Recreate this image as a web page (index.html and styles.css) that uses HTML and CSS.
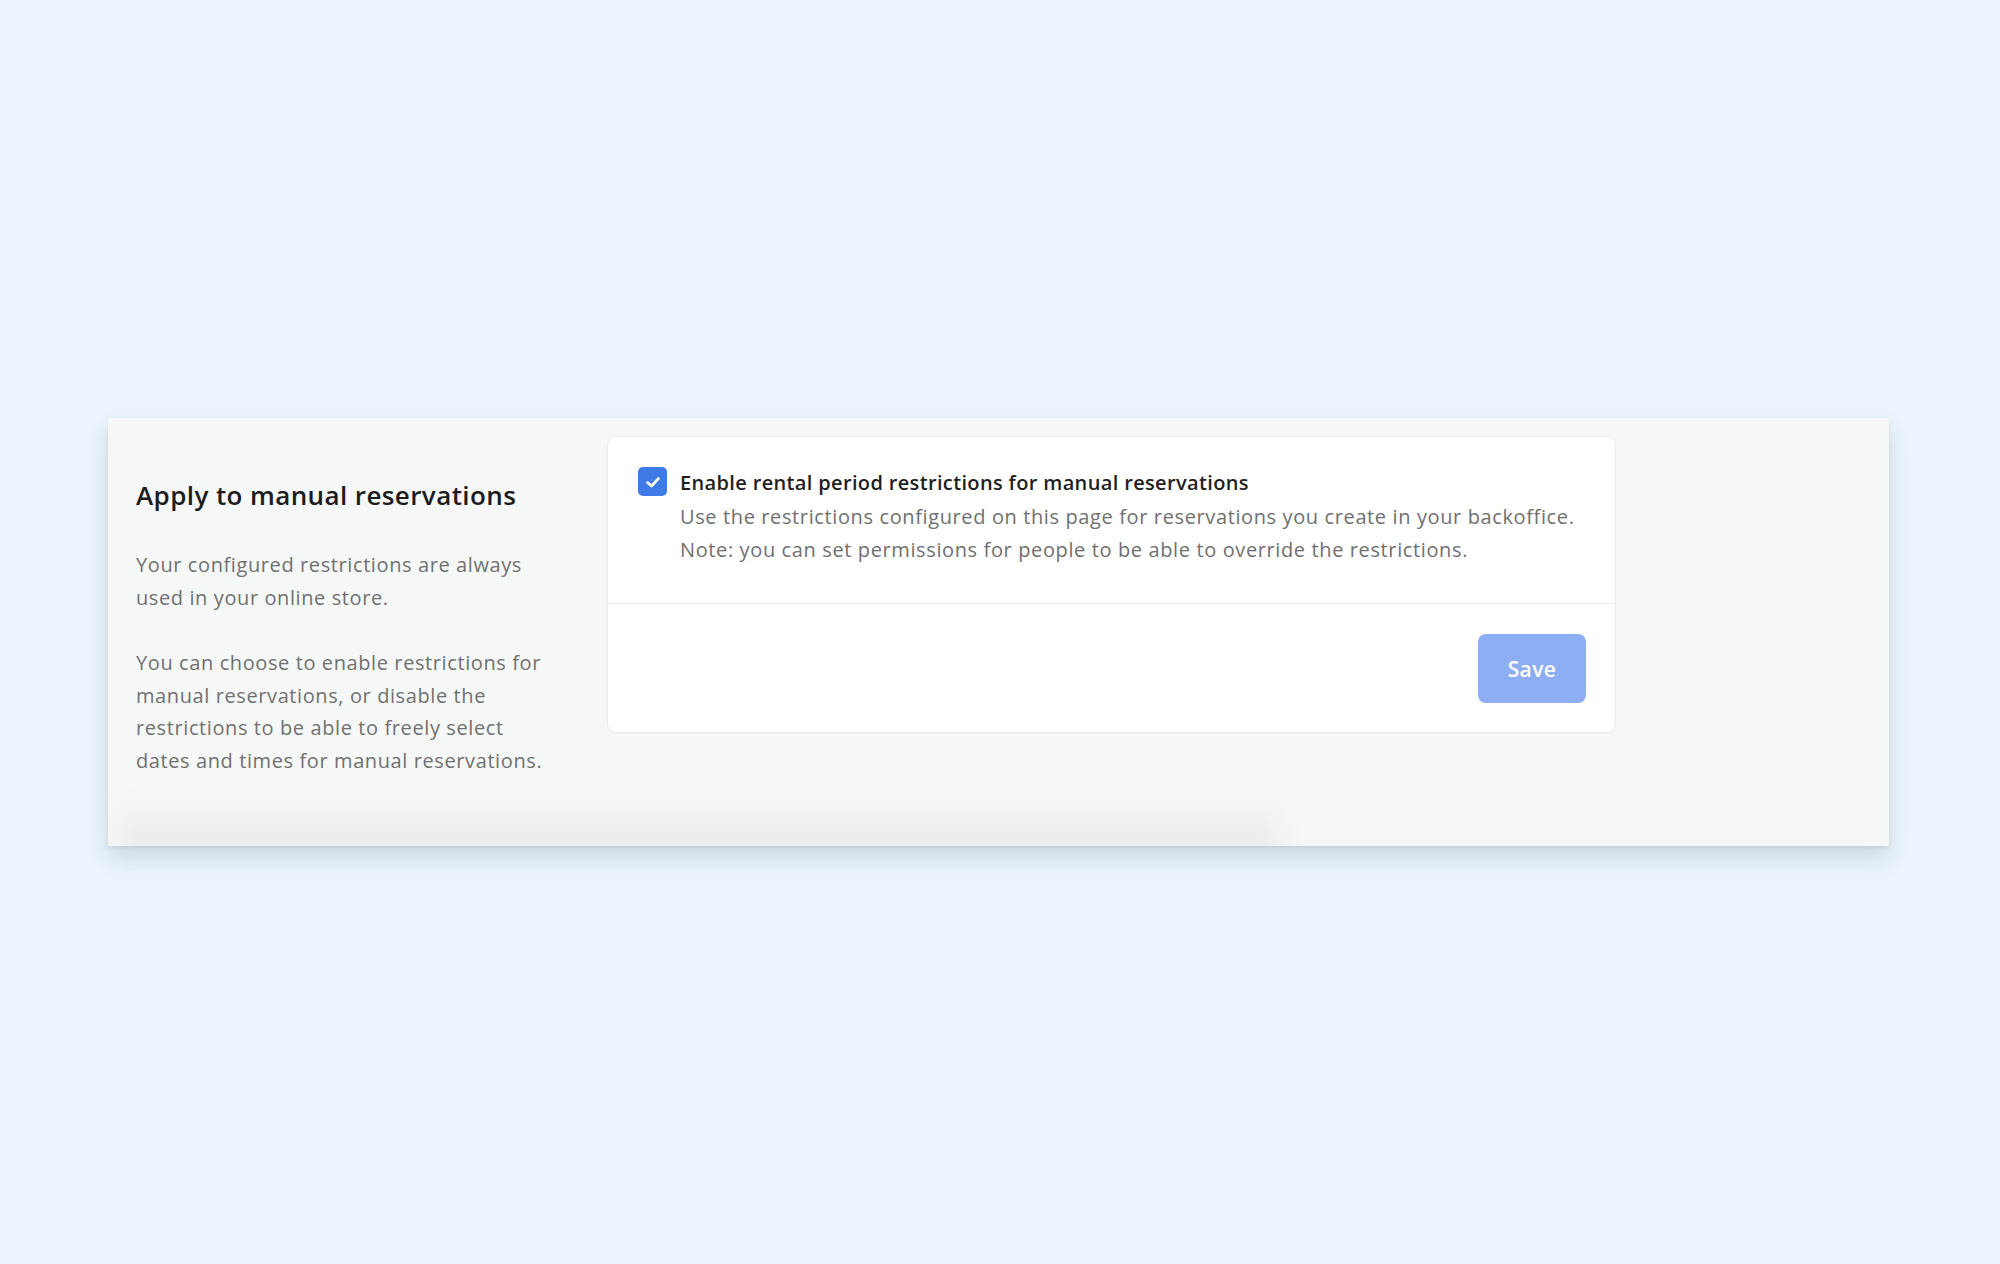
FILE: index.html
```html
<!DOCTYPE html>
<html lang="en">
<head>
<meta charset="utf-8">
<title>Apply to manual reservations</title>
<link rel="stylesheet" href="styles.css">
</head>
<body>
<div class="page">
  <section class="panel">
    <div class="intro">
      <h2 class="intro-title">Apply to manual reservations</h2>
      <p class="intro-text">Your configured restrictions are always used in your online store.</p>
      <p class="intro-text">You can choose to enable restrictions for manual reservations, or disable the restrictions to be able to freely select dates and times for manual reservations.</p>
    </div>
    <div class="card">
      <div class="card-body">
        <label class="check-row">
          <span class="checkbox">
            <svg viewBox="0 0 28 28" width="28" height="28"><polyline points="8.5,14.5 12.5,18 19.5,10.5" fill="none" stroke="#fff" stroke-width="2.6" stroke-linecap="round" stroke-linejoin="round"/></svg>
          </span>
          <span class="check-text">
            <span class="check-label">Enable rental period restrictions for manual reservations</span>
            <span class="check-desc">Use the restrictions configured on this page for reservations you create in your backoffice.<br>Note: you can set permissions for people to be able to override the restrictions.</span>
          </span>
        </label>
      </div>
      <div class="card-footer">
        <button class="btn-save" type="button">Save</button>
      </div>
    </div>
  </section>
</div>
</body>
</html>
```
FILE: styles.css
```css
html, body {
  margin: 0;
  padding: 0;
}
body {
  background: #ecf5fd;
  font-family: "Open Sans", "Liberation Sans", sans-serif;
  width: 2000px;
  height: 1264px;
  overflow: hidden;
}
.page {
  padding: 418px 111px 0 108px;
}
.panel {
  position: relative;
  overflow: hidden;
  display: flex;
  align-items: flex-start;
  gap: 57px;
  height: 428px;
  box-sizing: border-box;
  padding: 19px 28px 0 28px;
  background: #f6f8f8;
  box-shadow: 0 12px 22px rgba(40, 60, 80, 0.16), 0 2px 4px rgba(40, 60, 80, 0.08);
}
.panel::after {
  content: "";
  position: absolute;
  left: 10px;
  bottom: -10px;
  width: 1160px;
  height: 58px;
  background: linear-gradient(to bottom, rgba(0,0,0,0) 0%, rgba(0,0,0,0.065) 100%);
  filter: blur(14px);
  pointer-events: none;
}
.intro {
  width: 415px;
  flex: none;
  padding-top: 42px;
  position: relative;
  z-index: 1;
}
.intro-title {
  margin: 0 0 38px;
  font-size: 26px;
  line-height: 32px;
  font-weight: 600;
  letter-spacing: 0.4px;
  color: #1c1c1c;
}
.intro-text {
  margin: 0 0 33px;
  font-size: 20px;
  line-height: 32.5px;
  letter-spacing: 0.6px;
  color: #707070;
}
.card {
  width: 1007px;
  flex: none;
  background: #fff;
  border-radius: 8px;
  box-shadow: 0 0 0 1px rgba(0,0,0,0.03), 0 1px 3px rgba(0,0,0,0.05);
  position: relative;
  z-index: 1;
}
.card-body {
  padding: 30px 30px 37px;
  border-bottom: 1px solid #ebeced;
}
.check-row {
  display: flex;
  align-items: flex-start;
  gap: 13px;
}
.checkbox {
  flex: none;
  width: 29px;
  height: 29px;
  border-radius: 5px;
  background: #3e7be6;
  display: flex;
  align-items: center;
  justify-content: center;
}
.checkbox svg {
  display: block;
}
.check-text {
  display: flex;
  flex-direction: column;
  padding-top: 1px;
}
.check-label {
  font-size: 20px;
  line-height: 30px;
  font-weight: 600;
  letter-spacing: 0.35px;
  color: #1f1f1f;
}
.check-desc {
  margin-top: 2px;
  font-size: 20px;
  line-height: 33.2px;
  letter-spacing: 0.62px;
  color: #707070;
}
.card-footer {
  display: flex;
  justify-content: flex-end;
  padding: 30px 29px 29px;
}
.btn-save {
  width: 108px;
  height: 69px;
  border: none;
  border-radius: 8px;
  background: #8eaef4;
  color: #fff;
  font-family: inherit;
  font-size: 21px;
  font-weight: 600;
  letter-spacing: 0.4px;
}
```
